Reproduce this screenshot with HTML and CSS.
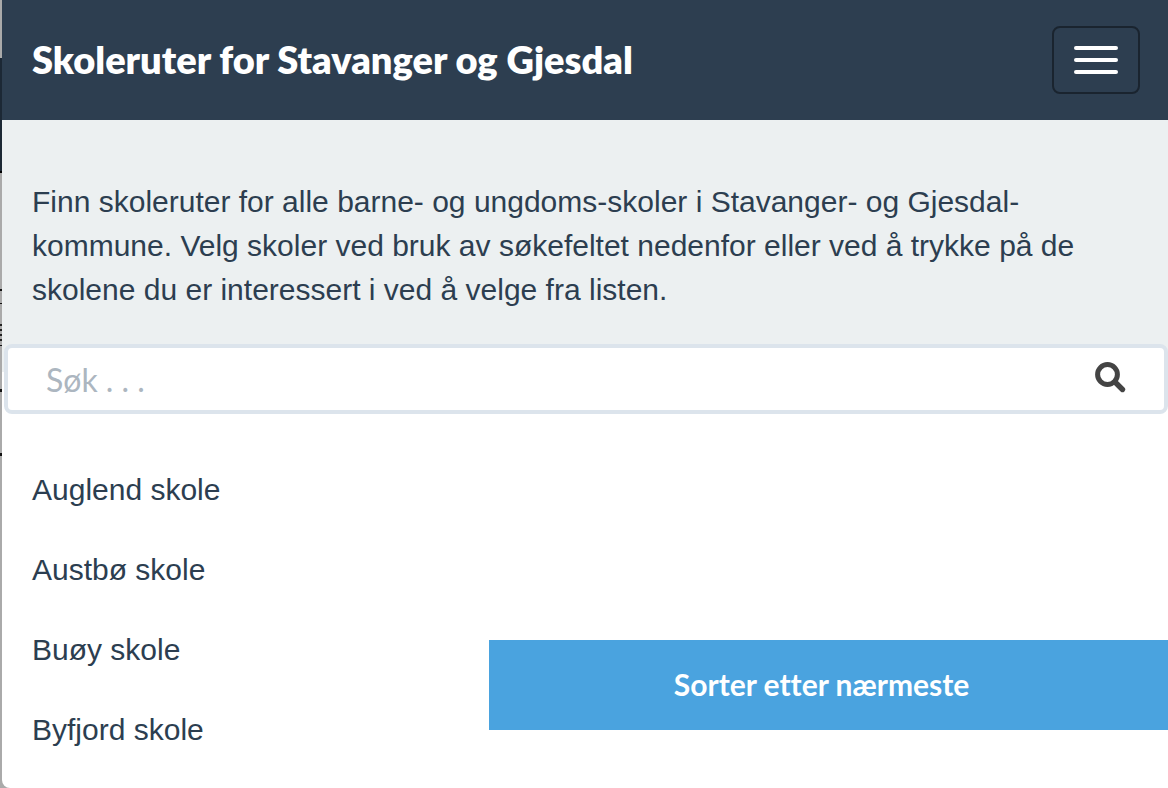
FILE: index.html
```html
<!DOCTYPE html>
<html lang="no">
<head>
<meta charset="utf-8">
<title>Skoleruter for Stavanger og Gjesdal</title>
<link rel="stylesheet" href="styles.css">
</head>
<body>
<div class="app">
  <header class="navbar">
    <h1 class="brand">Skoleruter for Stavanger og Gjesdal</h1>
    <button class="menu-toggle" type="button" aria-label="Meny">
      <span class="bar"></span><span class="bar"></span><span class="bar"></span>
    </button>
  </header>
  <main>
    <p class="intro">Finn skoleruter for alle barne- og ungdoms-skoler i Stavanger- og Gjesdal-kommune. Velg skoler ved bruk av søkefeltet nedenfor eller ved å trykke på de skolene du er interessert i ved å velge fra listen.</p>
    <div class="search-area">
      <form class="search">
        <input class="search-input" type="text" placeholder="Søk . . ." aria-label="Søk">
        <button class="search-button" type="button" aria-label="Søk">
          <svg class="search-icon" viewBox="0 0 32 34" aria-hidden="true"><circle cx="12.500" cy="13.500" r="9.900" fill="none" stroke="currentColor" stroke-width="5"/><path d="M20 21l7.500 7.500" stroke="currentColor" stroke-width="5.400" stroke-linecap="round"/></svg>
        </button>
      </form>
    </div>
    <ul class="schools">
      <li class="school">Auglend skole</li>
      <li class="school">Austbø skole</li>
      <li class="school">Buøy skole</li>
      <li class="school">Byfjord skole</li>
    </ul>
  </main>
  <button class="sort-button" type="button">Sorter etter nærmeste</button>
</div>
</body>
</html>
```
FILE: styles.css
```css
* { box-sizing: border-box; }
body {
  margin: 0;
  background: linear-gradient(#aaa 58px, #1c2835 58px 171px, #000 171px 173px, #aaa 173px 289px, #111 289px 291px, #aaa 291px 303px, #111 303px 304px, #aaa 304px 324px, #222 324px 326px, #aaa 326px 329px, #222 329px 331px, #aaa 331px 334px, #222 334px 336px, #aaa 336px 339px, #222 339px 341px, #aaa 341px 345px, #111 345px 346px, #aaa 346px 389px, #111 389px 392px, #aaa 392px 453px, #111 453px 456px, #aaa 456px);
  color: #2c3e50;
  font-family: "Liberation Sans", Arial, sans-serif;
}
.app {
  min-height: 100vh;
  margin-left: 2px;
  background: #fff;
  border-bottom-left-radius: 8px;
}
.navbar {
  display: flex;
  align-items: center;
  justify-content: space-between;
  min-height: 120px;
  padding: 0 28px 0 30px;
  background: #2d3e50;
}
.brand {
  margin: 0;
  padding-bottom: 2px;
  color: #fff;
  font: 800 38px/48px Lato, sans-serif;
}
.menu-toggle {
  display: flex;
  flex-direction: column;
  align-items: center;
  justify-content: center;
  gap: 8px;
  width: 88px;
  height: 68px;
  padding: 0;
  background: transparent;
  border: 2px solid #1a242f;
  border-radius: 8px;
}
.bar {
  width: 44px;
  height: 4px;
  border-radius: 2px;
  background: #fff;
}
.intro {
  margin: 0;
  padding: 60px 80px 32px 30px;
  background: #ecf0f1;
  font-size: 30px;
  line-height: 44px;
}
.search-area {
  padding-left: 2px;
  background: linear-gradient(#ecf0f1 28px, #fff 28px);
}
.search {
  display: flex;
  align-items: center;
  height: 70px;
  padding-right: 37px;
  background: #fff;
  border: 4px solid #dce4ec;
  border-radius: 8px;
}
.search-input {
  flex: 1;
  min-width: 0;
  padding: 2px 0 0 38px;
  color: inherit;
  background: transparent;
  border: 0;
  outline: 0;
  font: 400 32px/48px Lato, sans-serif;
}
.search-input::placeholder { color: #acb6c0; opacity: 1; }
.search-button {
  display: flex;
  padding: 0 0 2px;
  color: #444;
  background: none;
  border: 0;
}
.search-icon { width: 32px; height: 34px; }
.schools {
  margin: 0;
  padding: 36px 30px 0;
  list-style: none;
}
.school {
  font-size: 30px;
  line-height: 80px;
}
.sort-button {
  position: fixed;
  right: 0;
  bottom: 58px;
  width: 58.125%;
  height: 90px;
  padding: 0 14px 2px 0;
  color: #fff;
  background: #4aa3df;
  border: 0;
  font: 700 30px/40px Lato, sans-serif;
  font-variant-ligatures: none;
}
```
